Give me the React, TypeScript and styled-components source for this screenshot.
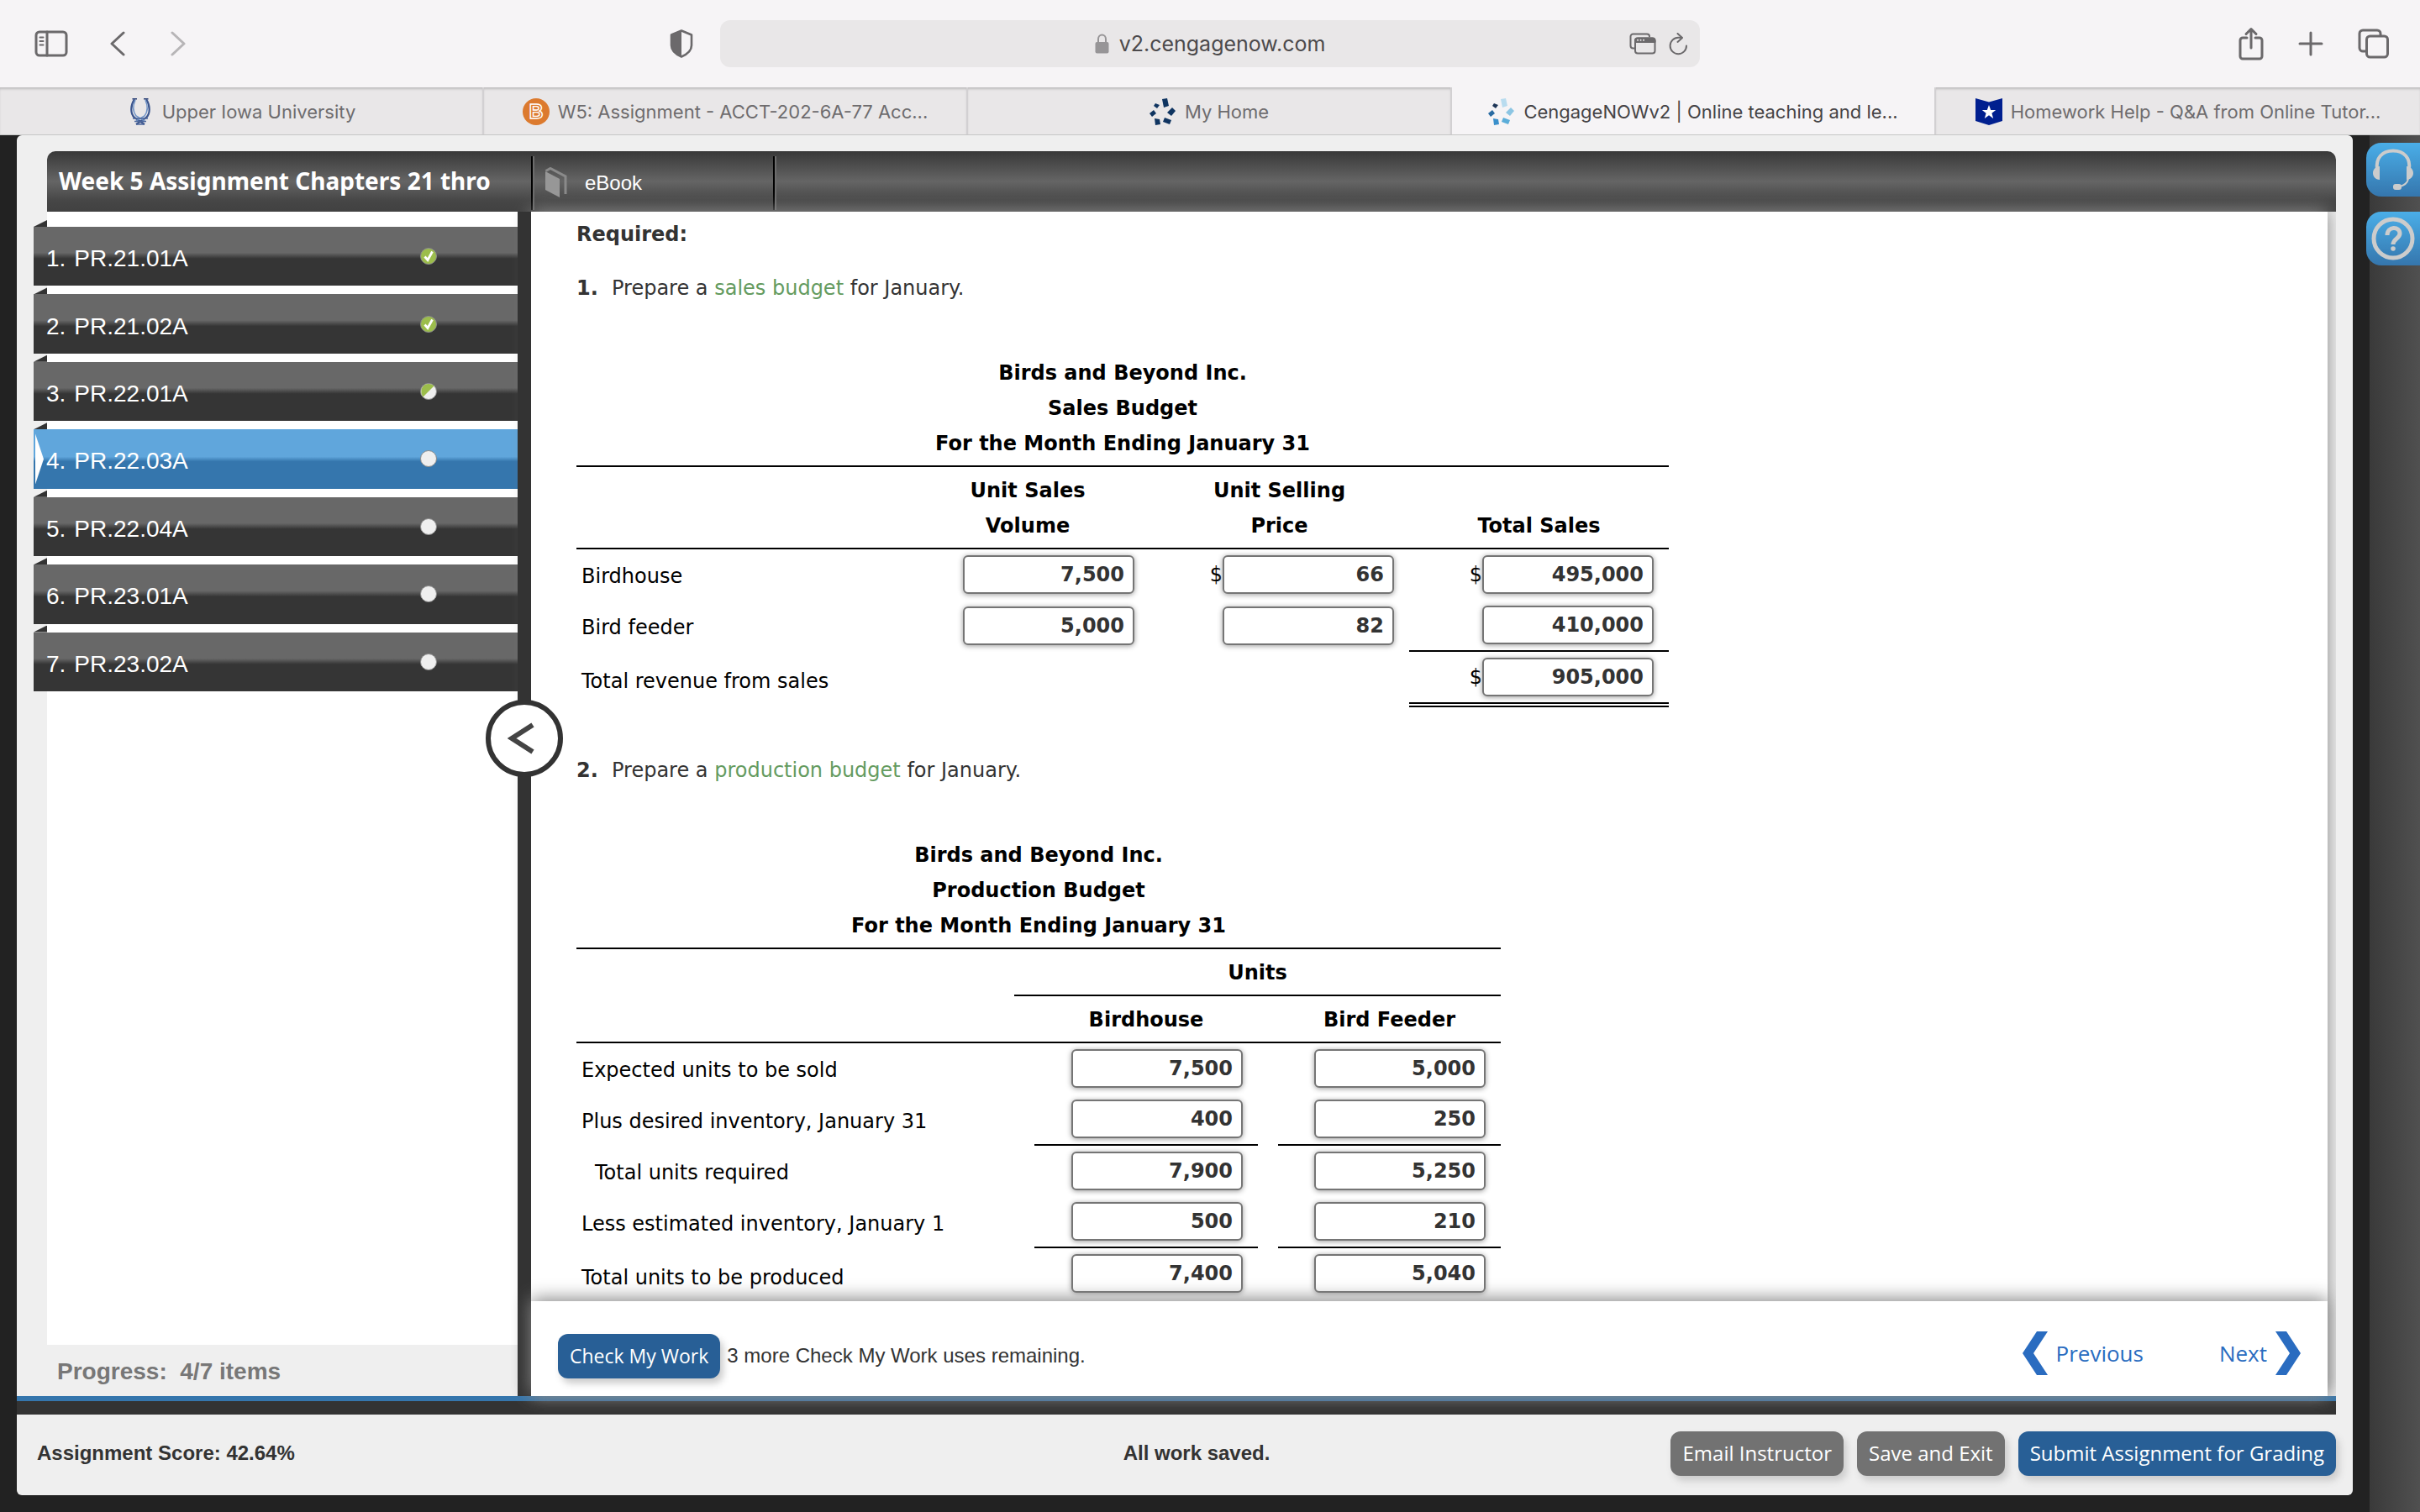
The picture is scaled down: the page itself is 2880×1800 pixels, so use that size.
import React from "react";
import styled, { createGlobalStyle, css } from "styled-components";

const ui = `Inter, "Liberation Sans", sans-serif`;
const arial = `"Liberation Sans", Arial, sans-serif`;
const verdana = `Verdana, "DejaVu Sans", sans-serif`;
const open = `"Open Sans", "Noto Sans", sans-serif`;

const GlobalStyle = createGlobalStyle`
  *, *::before, *::after { box-sizing: border-box; }
  body { margin: 0; background: #222; font-family: ${arial}; color: #333; }
  button { border: 0; background: none; padding: 0; font: inherit; color: inherit; cursor: pointer; }
  a { color: inherit; text-decoration: none; }
  svg { display: block; flex: none; }
`;

const Window = styled.div`
  display: flex;
  flex-direction: column;
  height: 100vh;
`;

/* ---------- browser chrome ---------- */

const Toolbar = styled.header`
  display: grid;
  grid-template-columns: 1fr minmax(0, 1166px) 1fr;
  align-items: center;
  height: 104px;
  background: #f6f4f6;
  color: #6b696b;
`;

const ToolGroup = styled.div<{ $end?: boolean }>`
  display: flex;
  align-items: center;
  gap: ${(p) => (p.$end ? 41 : 50)}px;
  padding: ${(p) => (p.$end ? "0 36px 0 0" : "0 0 0 41px")};
  justify-content: ${(p) => (p.$end ? "flex-end" : "flex-start")};
`;

const NavPair = styled.div`
  display: flex;
  gap: 54px;
`;

const IconButton = styled.button<{ $dim?: boolean }>`
  opacity: ${(p) => (p.$dim ? 0.45 : 1)};
`;

const ShieldButton = styled.button`
  margin-left: auto;
  margin-right: 32px;
`;

const AddressBar = styled.div`
  display: grid;
  grid-template-columns: 1fr auto 1fr;
  align-items: center;
  height: 56px;
  padding: 0 14px;
  border-radius: 12px;
  background: #e9e7e8;
`;

const Address = styled.div`
  display: flex;
  align-items: center;
  gap: 12px;
  grid-column: 2;
  font: 25px/32px ${ui};
  color: #4c4a4c;
`;

const AddressTools = styled.div`
  display: flex;
  justify-content: flex-end;
  gap: 15px;
`;

const TabStrip = styled.nav`
  display: grid;
  grid-template-columns: repeat(5, 1fr);
  height: 57px;
  border-bottom: 1px solid #c6c6c6;
  background: #f6f4f6;
`;

const Tab = styled.a<{ $active?: boolean }>`
  display: flex;
  align-items: center;
  justify-content: center;
  gap: 10px;
  min-width: 0;
  padding: 2px 16px 0;
  border-right: 2px solid #d2d0d2;
  font: 22px/32px ${ui};
  white-space: nowrap;
  ${(p) =>
    p.$active
      ? css`
          background: #f6f4f6;
          color: #454345;
        `
      : css`
          background: #e9e7e8;
          color: #6e6c6e;
          box-shadow: inset 0 3px 3px -1px #bcbabc;
        `}
  &:last-child {
    border-right: 0;
  }
`;

/* ---------- application frame ---------- */

const Stage = styled.div`
  display: grid;
  grid-template-columns: minmax(0, 1fr) 60px;
  flex: 1;
  min-height: 0;
`;

const Frame = styled.div`
  display: flex;
  padding: 0 20px 20px;
  min-height: 0;
  background: #222;
`;

const Sheet = styled.div`
  display: flex;
  flex: 1;
  flex-direction: column;
  min-width: 0;
  padding-top: 19px;
  border-radius: 6px;
  background: #efefef;
`;

const Rail = styled.aside`
  display: flex;
  flex-direction: column;
  gap: 18px;
  padding-top: 9px;
  background: linear-gradient(90deg, #3a3a3a, #505050);
`;

const RailButton = styled.button`
  display: flex;
  align-items: center;
  justify-content: center;
  width: 64px;
  height: 64px;
  margin-left: -4px;
  border-radius: 18px 0 0 18px;
  background: linear-gradient(#4aaee8, #3576ad);
  color: #ccc;
`;

const TitleBar = styled.div`
  display: flex;
  height: 72px;
  margin: 0 20px 0 36px;
  border-radius: 10px 10px 0 0;
  background: linear-gradient(#383838, #656565 50%, #464646 82%, #414141);
  color: #fff;
`;

const Title = styled.h1`
  width: 576px;
  margin: 0;
  padding: 0 0 0 14px;
  overflow: hidden;
  font: bold 28px/70px "Noto Sans", "Open Sans", sans-serif;
  white-space: nowrap;
`;

const BookLink = styled.a`
  display: flex;
  align-items: center;
  gap: 20px;
  width: 290px;
  height: 64px;
  margin-top: 6px;
  padding-left: 14px;
  border-left: 2px solid #000;
  border-right: 2px solid #000;
  box-shadow: inset 2px 0 #6c6c6c, 2px 0 #6c6c6c;
  font: 24px/32px ${arial};
`;

const Body = styled.div`
  display: flex;
  flex: 1;
  min-height: 0;
  margin-right: 20px;
  padding-left: 36px;
  overflow-x: clip;
`;

/* ---------- question list ---------- */

const Sidebar = styled.aside`
  display: flex;
  flex-direction: column;
  justify-content: space-between;
  width: 560px;
  background: #fff;
`;

const QuestionList = styled.ol`
  display: grid;
  grid-template-rows: repeat(7, 1fr);
  row-gap: 2px;
  height: 561px;
  margin: 10px 0 0 -16px;
  padding: 0;
  list-style: none;
`;

const QuestionItem = styled.li`
  display: flex;
  flex-direction: column;
  &::before {
    content: "";
    width: 16px;
    height: 8px;
    background: #333;
    clip-path: polygon(100% 0, 100% 100%, 0 100%);
  }
`;

const Question = styled.a<{ $active?: boolean }>`
  display: flex;
  flex: 1;
  align-items: center;
  gap: 3px;
  padding: 0 95px 0 2px;
  background: ${(p) =>
    p.$active
      ? "linear-gradient(#60a6dc 46%, #3576ad 54%)"
      : "linear-gradient(#686868 44%, #353535 54%)"};
  color: #fff;
  font: 28px/32px ${arial};
`;

const Pointer = styled.span<{ $shown?: boolean }>`
  width: 10px;
  height: 60px;
  background: ${(p) => (p.$shown ? "#fff" : "transparent")};
  clip-path: polygon(0 0, 100% 50%, 0 100%);
`;

const QuestionName = styled.span`
  display: flex;
  flex: 1;
  gap: 10px;
  padding-top: 6px;
`;

const Progress = styled.div`
  height: 61px;
  padding: 14px 12px;
  background: #efefef;
  color: #777;
  font: bold 28px/36px ${arial};
  white-space: pre;
`;

const Divider = styled.div`
  position: relative;
  z-index: 1;
  width: 16px;
  background: #333;
`;

const CollapseButton = styled.button`
  position: absolute;
  top: 581px;
  left: -38px;
  display: flex;
  align-items: center;
  justify-content: center;
  width: 92px;
  height: 92px;
  padding-right: 6px;
  border: 6px solid #333;
  border-radius: 50%;
  background: #fff;
  z-index: 3;
`;

/* ---------- work area ---------- */

const Panel = styled.main`
  position: relative;
  display: flex;
  flex: 1;
  flex-direction: column;
  min-width: 0;
  margin-right: 10px;
  background: #fff;
  box-shadow: 0 -2px 20px #888;
`;

const Scroll = styled.div`
  flex: 1;
  min-height: 0;
  margin-bottom: 3px;
  padding: 6px 54px 0;
  overflow: hidden;
  font: 24px/42px ${verdana};
`;

const Lead = styled.p`
  margin: 0;
  font-weight: bold;
`;

const Prompt = styled.p<{ $top: number }>`
  display: flex;
  margin: ${(p) => p.$top}px 0 58px;
`;

const PromptNumber = styled.b`
  width: 42px;
`;

const Term = styled.a`
  color: #649b5f;
`;

const BudgetTable = styled.table<{ $width: number }>`
  width: ${(p) => p.$width}px;
  border-collapse: separate;
  border-spacing: 0;
  table-layout: fixed;
  color: #000;
  caption {
    padding: 1px 0 5px;
    font-weight: bold;
  }
`;

const Line = styled.span`
  display: block;
`;

const Head = styled.th<{ $rule?: boolean; $top?: boolean }>`
  padding: 7px 0 5px;
  vertical-align: bottom;
  border-top: ${(p) => (p.$top ? "2px solid #000" : "0")};
  border-bottom: ${(p) => (p.$rule ? "2px solid #000" : "0")};
`;

const Label = styled.th<{ $indent?: boolean }>`
  padding: 4px 0 0 ${(p) => (p.$indent ? 22 : 6)}px;
  font-weight: normal;
  text-align: left;
  white-space: nowrap;
`;

const cellLines = {
  none: css`
    height: 60px;
  `,
  single: css`
    height: 62px;
    border-bottom: 2px solid #000;
  `,
  double: css`
    height: 66px;
    border-bottom: 6px double #000;
  `,
};

const Cell = styled.td<{ $line?: keyof typeof cellLines }>`
  padding: 0 18px 0 0;
  ${(p) => cellLines[p.$line ?? "none"]}
`;

const Amount = styled.label`
  display: flex;
  align-items: center;
  justify-content: flex-end;
`;

const AmountInput = styled.input`
  width: 204px;
  height: 46px;
  padding: 0 10px;
  border: 2px solid #757575;
  border-radius: 6px;
  background: #fff;
  box-shadow: 0 1px 6px #999;
  color: #333;
  font: bold 24px/40px ${verdana};
  text-align: right;
`;

const PanelFooter = styled.footer`
  position: relative;
  z-index: 2;
  display: flex;
  align-items: center;
  height: 113px;
  padding: 17px 32px 0;
  background: #fff;
  box-shadow: 0 -3px 20px #888;
`;

const ActionButton = styled.button<{ $primary?: boolean; $small?: boolean }>`
  height: 53px;
  padding: 0 14px;
  border-radius: 12px;
  background: ${(p) => (p.$primary ? "#285f96" : "#727272")};
  box-shadow: 4px 6px 8px #ccc;
  color: #fff;
  font: ${(p) => (p.$small ? 23 : 24)}px/32px ${open};
  white-space: nowrap;
`;

const Remaining = styled.span`
  margin-left: 8px;
  font: 24px/32px ${arial};
`;

const Pager = styled.nav`
  display: flex;
  gap: 90px;
  margin-left: auto;
  padding-bottom: 6px;
  color: #2a6cc0;
  font: 26px/52px ${open};
`;

const PagerLink = styled.a`
  display: flex;
  gap: 10px;
`;

const AccentLine = styled.div`
  height: 6px;
  margin-right: 20px;
  background: #3576ad;
`;

const DarkLine = styled.div`
  height: 16px;
  margin-right: 20px;
  background: #333;
`;

const StatusBar = styled.footer`
  display: grid;
  grid-template-columns: 1fr auto 1fr;
  align-items: center;
  height: 96px;
  padding: 0 20px 4px 24px;
  font: bold 24px/32px ${arial};
`;

const Saved = styled.span`
  padding-left: 24px;
`;

const Actions = styled.div`
  display: flex;
  justify-content: flex-end;
  gap: 16px;
`;

/* ---------- drawings ---------- */

const stroke = { fill: "none", stroke: "currentColor", strokeWidth: 3, strokeLinecap: "round", strokeLinejoin: "round" } as const;

const SidebarIcon = () => (
  <svg width="40" height="32" viewBox="0 0 40 32" {...stroke}>
    <rect x="2" y="2" width="36" height="28" rx="4" />
    <path d="M15 2v28" />
    <path d="M6.500 8.500h4M6.500 13h4M6.500 17.500h4" strokeWidth="2" />
  </svg>
);

const Chevron = ({ flip }: { flip?: boolean }) => (
  <svg width="18" height="30" viewBox="0 0 18 30" {...stroke}>
    <path d={flip ? "M2 2l14 13L2 28" : "M16 2L2 15l14 13"} />
  </svg>
);

const ShieldIcon = () => (
  <svg width="28" height="34" viewBox="0 0 28 34">
    <path d="M14 1.500l12 5V19c0 6-5 10.500-12 13.500C7 29.500 2 25 2 19V6.500z" fill="none" stroke="currentColor" strokeWidth="2.600" strokeLinejoin="round" />
    <path d="M14 1.500V32.500C7 29.500 2 25 2 19V6.500z" fill="currentColor" />
  </svg>
);

const LockIcon = () => (
  <svg width="17" height="24" viewBox="0 0 17 24">
    <path d="M4 11V6.500a4.500 5 0 0 1 9 0V11" fill="none" stroke="#979597" strokeWidth="2" />
    <rect x="0.500" y="10" width="16" height="13.500" rx="2" fill="#979597" />
  </svg>
);

const WindowsIcon = () => (
  <svg width="32" height="26" viewBox="0 0 32 26" {...stroke} strokeWidth={2}>
    <path d="M6 18.500H4.500A3 3 0 0 1 1.500 15.500V4.500A3 3 0 0 1 4.500 1.500H21a3 3 0 0 1 3 3" />
    <rect x="7" y="6.500" width="23.500" height="18" rx="3" />
    <path d="M7 11V9.500a3 3 0 0 1 3-3h17.500a3 3 0 0 1 3 3V11z" fill="currentColor" />
    <path d="M10 8.800h.1M13.500 8.800h.1M17 8.800h.1" stroke="#e9e7e8" />
  </svg>
);

const ReloadIcon = () => (
  <svg width="23" height="27" viewBox="0 0 23 27" {...stroke} strokeWidth={2}>
    <path d="M21 15.500a9.700 9.700 0 1 1-9.700-9.700h4" />
    <path d="M10.500 1l5.500 4.900-5.500 5" />
  </svg>
);

const ShareIcon = () => (
  <svg width="30" height="40" viewBox="0 0 30 40" {...stroke}>
    <path d="M10 13H5a3 3 0 0 0-3 3v19a3 3 0 0 0 3 3h20a3 3 0 0 0 3-3V16a3 3 0 0 0-3-3h-5" />
    <path d="M15 25V3M9 8.500L15 2.500l6 6" />
  </svg>
);

const PlusIcon = () => (
  <svg width="30" height="30" viewBox="0 0 30 30" {...stroke}>
    <path d="M15 2v26M2 15h26" />
  </svg>
);

const TabsIcon = () => (
  <svg width="38" height="36" viewBox="0 0 38 36" {...stroke}>
    <path d="M9 27H6a4 4 0 0 1-4-4V6a4 4 0 0 1 4-4h17a4 4 0 0 1 4 4v2.500" />
    <rect x="10.500" y="9" width="25" height="25" rx="4" />
  </svg>
);

const UniversityLogo = () => (
  <svg width="32" height="32" viewBox="0 0 32 32" fill="none" stroke="#4c679c" strokeWidth="1.500">
    <path d="M12 0.700H6.500M20 0.700h5.500" stroke="#2b3f73" />
    <path d="M9 1C4 9 4 18 9 23l12 8" stroke="#3c568e" strokeWidth="2.200" />
    <path d="M23 1c5 8 5 17 0 22L11 31" stroke="#3c568e" strokeWidth="2.200" />
    <path d="M10 2C7 9 7 16 11 21l10 6M22 2c3 7 3 14-1 19l-10 6" stroke="#6f93c6" />
    <path d="M7 24h18M9 27.500h14M11 31h10" />
  </svg>
);

const BartlebyLogo = () => (
  <svg width="32" height="32" viewBox="0 0 32 32">
    <circle cx="16" cy="16" r="16" fill="#dc7a2e" />
    <text
      x="16"
      y="24"
      textAnchor="middle"
      fontFamily="Liberation Sans, sans-serif"
      fontWeight="bold"
      fontSize="23"
      fill="#dc7a2e"
      stroke="#fff"
      strokeWidth="1.400"
    >
      B
    </text>
  </svg>
);

const bladePoints = [
  "15,1 21,0 23,9 17,11",
  "27,11 31,15 26,21 21,17",
  "18,23 26,26 24,31 16,28",
  "6,24 12,25 13,31 7,32",
  "5,14 8,18 3,22 0,18",
  "7,6 12,8 9,12 5,9",
];

const CengageLogo = ({ colors }: { colors: string[] }) => (
  <svg width="32" height="32" viewBox="0 0 32 32">
    {bladePoints.map((points, i) => (
      <polygon key={points} points={points} fill={colors[i % colors.length]} />
    ))}
  </svg>
);

const StarLogo = () => (
  <svg width="32" height="32" viewBox="0 0 32 32">
    <path d="M0 0l16 4.500L32 0v27l-16 5-16-5z" fill="#001f8f" />
    <path d="M16 8l2.200 6h6l-4.800 3.800 1.800 6.200-5.200-3.700-5.200 3.700 1.800-6.200L7.800 14h6z" fill="#fff" />
  </svg>
);

const BookIcon = () => (
  <svg width="28" height="38" viewBox="0 0 28 38">
    <path d="M1 5L18 14v22L1 27z" fill="#979797" />
    <path d="M1.500 4.500L7 1.500 25 11v21" fill="none" stroke="#8a8a8a" strokeWidth="3" />
  </svg>
);

const HeadsetIcon = () => (
  <svg width="50" height="52" viewBox="0 0 50 52">
    <path d="M6 26C4 12 12 3.500 25 3.500S46 12 44 26" fill="none" stroke="#ccc" strokeWidth="4" />
    <path d="M9 22v16c-5 0-8-4-8-8s3-8 8-8zM41 22v16c5 0 8-4 8-8s-3-8-8-8z" fill="#ccc" />
    <path d="M43 37c-1 5-5 8-11 9" fill="none" stroke="#ccc" strokeWidth="2" />
    <rect x="25" y="43" width="10" height="7" rx="3" fill="#ccc" />
  </svg>
);

const HelpIcon = () => (
  <svg width="52" height="52" viewBox="0 0 52 52" fill="none" stroke="#ccc">
    <circle cx="26" cy="26" r="23" strokeWidth="5" />
    <path d="M19 22c0-11 15-11 15-2 0 6-8 6-8 13" strokeWidth="5" />
    <circle cx="26" cy="38" r="2.800" fill="#ccc" stroke="none" />
  </svg>
);

const PagerArrow = ({ flip }: { flip?: boolean }) => (
  <svg width="30" height="52" viewBox="0 0 30 52" fill="currentColor">
    <path d={flip ? "M0 0h13l17 26-17 26H0l17-26z" : "M30 0H17L0 26l17 26h13L13 26z"} />
  </svg>
);

type Status = "done" | "half" | "open";

const StatusDot = ({ status }: { status: Status }) => (
  <svg width="22" height="22" viewBox="0 0 22 22" role="img" aria-label={status}>
    <circle cx="11" cy="11" r="9.500" fill={status === "done" ? "#9cbd4c" : "#efefef"} stroke="#8c8c8c" />
    {status === "done" && <path d="M6.500 11.500l3.500 4L15.500 5.500" fill="none" stroke="#fff" strokeWidth="2.800" />}
    {status === "half" && <path d="M4.500 17.500C0 11 3 2 11 2c3 0 5 1 6.500 2.500z" fill="#9cbd4c" />}
  </svg>
);

/* ---------- data ---------- */

const questions: { name: string; status: Status }[] = [
  { name: "PR.21.01A", status: "done" },
  { name: "PR.21.02A", status: "done" },
  { name: "PR.22.01A", status: "half" },
  { name: "PR.22.03A", status: "open" },
  { name: "PR.22.04A", status: "open" },
  { name: "PR.23.01A", status: "open" },
  { name: "PR.23.02A", status: "open" },
];

const production = [
  { label: "Expected units to be sold", house: "7,500", feeder: "5,000" },
  { label: "Plus desired inventory, January 31", house: "400", feeder: "250", line: true },
  { label: "Total units required", house: "7,900", feeder: "5,250", indent: true },
  { label: "Less estimated inventory, January 1", house: "500", feeder: "210", line: true },
  { label: "Total units to be produced", house: "7,400", feeder: "5,040", last: true },
];

const Field = ({ name, value, dollar }: { name: string; value: string; dollar?: boolean }) => (
  <Amount>
    {dollar && "$"}
    <AmountInput aria-label={name} defaultValue={value} />
  </Amount>
);

const SalesBudget = () => (
  <BudgetTable $width={1300}>
    <caption>
      <Line>Birds and Beyond Inc.</Line>
      <Line>Sales Budget</Line>
      <Line>For the Month Ending January 31</Line>
    </caption>
    <colgroup>
      <col width="392" />
      <col width="290" />
      <col width="309" />
      <col width="309" />
    </colgroup>
    <thead>
      <tr>
        <Head as="td" $top $rule />
        <Head $top $rule>
          <Line>Unit Sales</Line>
          <Line>Volume</Line>
        </Head>
        <Head $top $rule>
          <Line>Unit Selling</Line>
          <Line>Price</Line>
        </Head>
        <Head $top $rule>Total Sales</Head>
      </tr>
    </thead>
    <tbody>
      <tr>
        <Label scope="row">Birdhouse</Label>
        <Cell><Field name="Birdhouse unit sales volume" value="7,500" /></Cell>
        <Cell><Field name="Birdhouse unit selling price" value="66" dollar /></Cell>
        <Cell><Field name="Birdhouse total sales" value="495,000" dollar /></Cell>
      </tr>
      <tr>
        <Label scope="row">Bird feeder</Label>
        <Cell><Field name="Bird feeder unit sales volume" value="5,000" /></Cell>
        <Cell><Field name="Bird feeder unit selling price" value="82" /></Cell>
        <Cell $line="single"><Field name="Bird feeder total sales" value="410,000" /></Cell>
      </tr>
      <tr>
        <Label scope="row">Total revenue from sales</Label>
        <Cell />
        <Cell />
        <Cell $line="double"><Field name="Total revenue" value="905,000" dollar /></Cell>
      </tr>
    </tbody>
  </BudgetTable>
);

const ProductionBudget = () => (
  <BudgetTable $width={1100}>
    <caption>
      <Line>Birds and Beyond Inc.</Line>
      <Line>Production Budget</Line>
      <Line>For the Month Ending January 31</Line>
    </caption>
    <colgroup>
      <col width="521" />
      <col width="24" />
      <col width="266" />
      <col width="24" />
      <col width="265" />
    </colgroup>
    <thead>
      <tr>
        <Head as="td" $top />
        <Head $top $rule colSpan={4}>Units</Head>
      </tr>
      <tr>
        <Head as="td" $rule />
        <Head as="td" $rule />
        <Head $rule>Birdhouse</Head>
        <Head as="td" $rule />
        <Head $rule>Bird Feeder</Head>
      </tr>
    </thead>
    <tbody>
      {production.map((row) => {
        const line = row.last ? "double" : row.line ? "single" : undefined;
        return (
          <tr key={row.label}>
            <Label scope="row" $indent={row.indent}>{row.label}</Label>
            <td />
            <Cell $line={line}><Field name={`${row.label}, birdhouse`} value={row.house} /></Cell>
            <td />
            <Cell $line={line}><Field name={`${row.label}, bird feeder`} value={row.feeder} /></Cell>
          </tr>
        );
      })}
    </tbody>
  </BudgetTable>
);

export default function App() {
  return (
    <Window>
      <GlobalStyle />
      <Toolbar>
        <ToolGroup>
          <IconButton aria-label="Show sidebar"><SidebarIcon /></IconButton>
          <NavPair>
            <IconButton aria-label="Back"><Chevron /></IconButton>
            <IconButton aria-label="Forward" $dim><Chevron flip /></IconButton>
          </NavPair>
          <ShieldButton aria-label="Privacy report"><ShieldIcon /></ShieldButton>
        </ToolGroup>
        <AddressBar>
          <Address><LockIcon />v2.cengagenow.com</Address>
          <AddressTools>
            <IconButton aria-label="Windows"><WindowsIcon /></IconButton>
            <IconButton aria-label="Reload"><ReloadIcon /></IconButton>
          </AddressTools>
        </AddressBar>
        <ToolGroup $end>
          <IconButton aria-label="Share"><ShareIcon /></IconButton>
          <IconButton aria-label="New tab"><PlusIcon /></IconButton>
          <IconButton aria-label="All tabs"><TabsIcon /></IconButton>
        </ToolGroup>
      </Toolbar>
      <TabStrip>
        <Tab href="#uiu"><UniversityLogo />Upper Iowa University</Tab>
        <Tab href="#w5"><BartlebyLogo />W5: Assignment - ACCT-202-6A-77 Acc...</Tab>
        <Tab href="#home"><CengageLogo colors={["#0f3460"]} />My Home</Tab>
        <Tab href="#cnow" $active>
          <CengageLogo colors={["#b9dcef", "#8cc5e3", "#5badd9", "#3a8fcb", "#2a6ca3", "#1d3557"]} />
          CengageNOWv2 | Online teaching and le...
        </Tab>
        <Tab href="#help"><StarLogo />Homework Help - Q&amp;A from Online Tutor...</Tab>
      </TabStrip>
      <Stage>
        <Frame>
          <Sheet>
            <TitleBar>
              <Title>Week 5 Assignment Chapters 21 thro</Title>
              <BookLink href="#ebook"><BookIcon />eBook</BookLink>
            </TitleBar>
            <Body>
              <Sidebar>
                <QuestionList>
                  {questions.map((q, i) => (
                    <QuestionItem key={q.name}>
                      <Question href={`#q${i + 1}`} $active={i === 3}>
                        <Pointer $shown={i === 3} />
                        <QuestionName><span>{i + 1}.</span><span>{q.name}</span></QuestionName>
                        <StatusDot status={q.status} />
                      </Question>
                    </QuestionItem>
                  ))}
                </QuestionList>
                <Progress>Progress:  4/7 items</Progress>
              </Sidebar>
              <Divider>
                <CollapseButton aria-label="Collapse list">
                  <svg width="34" height="38" viewBox="0 0 34 38" fill="none" stroke="#444" strokeWidth="6">
                    <path d="M30 3L5 19l25 16" />
                  </svg>
                </CollapseButton>
              </Divider>
              <Panel>
                <Scroll>
                  <Lead>Required:</Lead>
                  <Prompt $top={22}>
                    <PromptNumber>1.</PromptNumber>
                    <span>Prepare a <Term href="#sales">sales budget</Term> for January.</span>
                  </Prompt>
                  <SalesBudget />
                  <Prompt $top={54}>
                    <PromptNumber>2.</PromptNumber>
                    <span>Prepare a <Term href="#production">production budget</Term> for January.</span>
                  </Prompt>
                  <ProductionBudget />
                </Scroll>
                <PanelFooter>
                  <ActionButton $primary $small>Check My Work</ActionButton>
                  <Remaining>3 more Check My Work uses remaining.</Remaining>
                  <Pager>
                    <PagerLink href="#previous"><PagerArrow />Previous</PagerLink>
                    <PagerLink href="#next">Next<PagerArrow flip /></PagerLink>
                  </Pager>
                </PanelFooter>
              </Panel>
            </Body>
            <AccentLine />
            <DarkLine />
            <StatusBar>
              <span>Assignment Score: 42.64%</span>
              <Saved>All work saved.</Saved>
              <Actions>
                <ActionButton>Email Instructor</ActionButton>
                <ActionButton>Save and Exit</ActionButton>
                <ActionButton $primary>Submit Assignment for Grading</ActionButton>
              </Actions>
            </StatusBar>
          </Sheet>
        </Frame>
        <Rail>
          <RailButton aria-label="Support"><HeadsetIcon /></RailButton>
          <RailButton aria-label="Help"><HelpIcon /></RailButton>
        </Rail>
      </Stage>
    </Window>
  );
}
